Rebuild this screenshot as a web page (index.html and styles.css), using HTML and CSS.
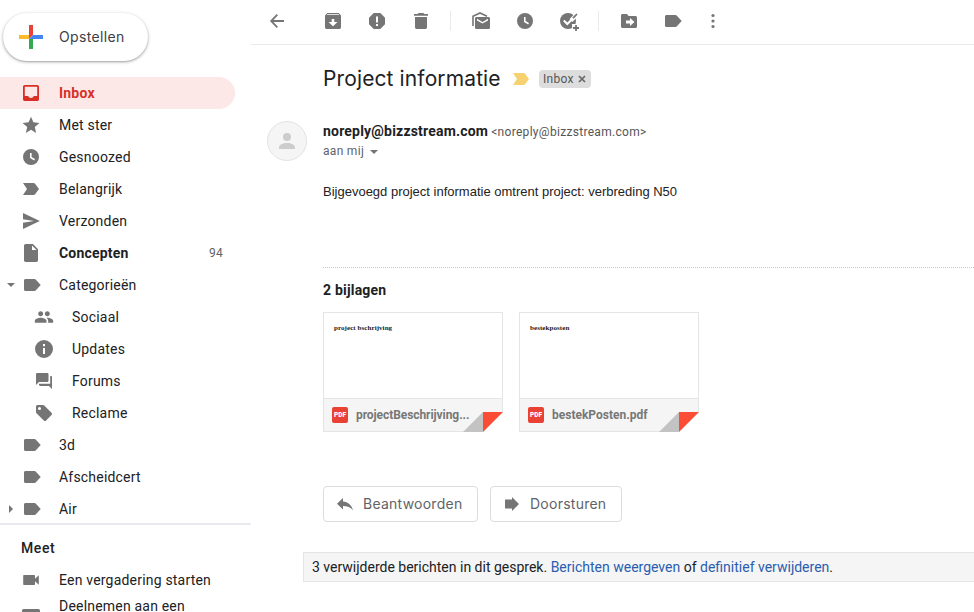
FILE: index.html
```html
<!DOCTYPE html>
<html lang="nl">
<head>
<meta charset="utf-8">
<title>Project informatie</title>
<link rel="stylesheet" href="styles.css">
</head>
<body>
<svg class="defs" aria-hidden="true">
  <symbol id="label" viewBox="0 0 20 20"><path d="M4.500 4h8.900c.6 0 1.100.3 1.500.8L19.700 10l-4.800 5.200c-.4.5-.9.8-1.500.8H4.500C3.700 16 3 15.300 3 14.500v-9C3 4.700 3.700 4 4.500 4z"/></symbol>
  <symbol id="important" viewBox="0 0 20 20"><path d="M2 4h10.600c.6 0 1.100.3 1.500.8L18 10l-3.900 5.200c-.4.5-.9.800-1.500.800H2l4-6z"/></symbol>
  <symbol id="clock" viewBox="0 0 20 20"><path fill-rule="evenodd" d="M10 2a8 8 0 1 0 0 16 8 8 0 0 0 0-16zM9 6h1.600v4l3.400 2-.8 1.400L9 11z"/></symbol>
  <symbol id="down" viewBox="0 0 10 10"><path d="M1 3h8L5 7z"/></symbol>
</svg>
<div class="app">
  <aside class="sidebar">
    <button class="compose">
      <svg width="24" height="24" viewBox="0 0 24 24"><path fill="#ea4335" d="M10 0h4v10l-4 4z"/><path fill="#fbbc2c" d="M0 10h10v4H0z"/><path fill="#34a853" d="M10 14h4v10h-4z"/><path fill="#4285f4" d="M14 10h10v4H10z"/></svg>
      <span>Opstellen</span>
    </button>
    <nav class="nav">
      <a class="row active"><svg class="ic" viewBox="0 0 20 20"><path fill-rule="evenodd" d="M3.800 2h12.400c1 0 1.800.8 1.800 1.800v12.400c0 1-.8 1.800-1.800 1.800H3.800c-1 0-1.800-.8-1.800-1.800V3.800C2 2.800 2.800 2 3.800 2zM3.800 3.800v9.200h3.400c.4 1.300 1.500 2 2.800 2s2.400-.7 2.800-2h3.400V3.800z"/></svg><span class="txt">Inbox</span></a>
      <a class="row"><svg class="ic" viewBox="0 0 20 20"><path d="M10 1.700l2.400 5.600 6 .6-4.600 4 1.300 6L10 14.800l-5.100 3.100 1.300-6-4.600-4 6-.6z"/></svg><span class="txt">Met ster</span></a>
      <a class="row"><svg class="ic"><use href="#clock"/></svg><span class="txt">Gesnoozed</span></a>
      <a class="row"><svg class="ic"><use href="#important"/></svg><span class="txt">Belangrijk</span></a>
      <a class="row"><svg class="ic" viewBox="0 0 20 20"><path d="M2 2l16.800 8L2 18v-6.200l11-1.800-11-1.800z"/></svg><span class="txt">Verzonden</span></a>
      <a class="row bold"><svg class="ic" viewBox="0 0 20 20"><path fill-rule="evenodd" d="M4.700 1H12l5 5.200v11.100c0 .9-.8 1.700-1.700 1.700H4.700C3.800 19 3 18.200 3 17.300V2.700C3 1.800 3.800 1 4.700 1zM11 2.500V7h4.500z"/></svg><span class="txt">Concepten</span><span class="count">94</span></a>
      <a class="row"><svg class="caret"><use href="#down"/></svg><svg class="ic"><use href="#label"/></svg><span class="txt">Categorieën</span></a>
      <a class="row sub"><svg class="ic" viewBox="0 0 24 24"><path d="M16 11c1.660 0 2.990-1.340 2.990-3S17.660 5 16 5s-3 1.340-3 3 1.340 3 3 3zm-8 0c1.660 0 2.990-1.340 2.990-3S9.660 5 8 5 5 6.340 5 8s1.340 3 3 3zm0 2c-2.330 0-7 1.170-7 3.500V19h14v-2.500c0-2.330-4.670-3.500-7-3.500zm8 0c-.29 0-.62.020-.97.050 1.160.84 1.970 1.970 1.970 3.450V19h6v-2.500c0-2.330-4.670-3.500-7-3.500z"/></svg><span class="txt">Sociaal</span></a>
      <a class="row sub"><svg class="ic" viewBox="0 0 20 20"><path fill-rule="evenodd" d="M10 1a9 9 0 1 0 0 18 9 9 0 0 0 0-18zM9 5h2v2.200H9zM9 9h2v6H9z"/></svg><span class="txt">Updates</span></a>
      <a class="row sub"><svg class="ic" viewBox="0 0 20 20"><path d="M3.500 2h9.700c.8 0 1.300.5 1.300 1.300v6.400c0 .8-.5 1.300-1.300 1.300H5l-3 3V3.300C2 2.500 2.700 2 3.500 2zM16.200 5H17c.6 0 1 .4 1 1v12l-3-3H6.300c-.8 0-1.300-.5-1.300-1.200v-1h11.200z"/></svg><span class="txt">Forums</span></a>
      <a class="row sub"><svg class="ic" viewBox="0 0 20 20"><path fill-rule="evenodd" d="M3.600 2H9c.5 0 .9.200 1.200.5l7.300 7.300c.7.600.7 1.600 0 2.300l-5.400 5.400c-.6.700-1.600.7-2.300 0L2.500 10.200C2.200 9.900 2 9.500 2 9V3.600C2 2.700 2.700 2 3.600 2zM5.500 4a1.500 1.500 0 1 0 0 3 1.500 1.500 0 0 0 0-3z"/></svg><span class="txt">Reclame</span></a>
      <a class="row"><svg class="ic"><use href="#label"/></svg><span class="txt">3d</span></a>
      <a class="row"><svg class="ic"><use href="#label"/></svg><span class="txt">Afscheidcert</span></a>
      <a class="row last"><svg class="caret" viewBox="0 0 10 10"><path d="M3 1v8l4-4z"/></svg><svg class="ic"><use href="#label"/></svg><span class="txt">Air</span></a>
    </nav>
    <section class="meet">
      <h2>Meet</h2>
      <a class="row"><svg class="ic" viewBox="0 0 20 20"><path d="M3 5h10.200c.5 0 .8.300.8.800v3L17.800 5.300v9.400L14 11.200v3c0 .5-.3.800-.8.800H3c-.5 0-.8-.3-.8-.8V5.800c0-.5.3-.8.800-.8z"/></svg><span class="txt">Een vergadering starten</span></a>
      <a class="row join"><svg class="ic" viewBox="0 0 20 20"><rect x="1" y="3" width="18" height="13" rx="1.500"/></svg><span class="txt">Deelnemen aan een</span></a>
    </section>
  </aside>
  <main class="main">
    <header class="toolbar">
      <svg class="ic back" viewBox="0 0 20 20"><path fill="none" stroke="#757575" stroke-width="1.800" d="M17 10H4.500M10.300 3.700L4.200 10l6.100 6.300"/></svg>
      <div class="group">
        <svg class="ic" viewBox="0 0 20 20"><path fill-rule="evenodd" d="M4.200 2h11.600L18 4.500v11.700c0 1-.8 1.800-1.800 1.800H3.800c-1 0-1.800-.8-1.800-1.800V4.500zM4.300 3.200l-.6.900h12.600l-.6-.9zM8.700 8v3H5.500l4.500 4.200 4.500-4.200h-3.200V8z"/></svg>
        <svg class="ic" viewBox="0 0 20 20"><path fill-rule="evenodd" d="M6.700 2h6.600L18 6.700v6.600L13.300 18H6.700L2 13.300V6.700zM9 5.500v6h2v-6zM9 13v2h2v-2z"/></svg>
        <svg class="ic" viewBox="0 0 20 20"><path d="M7.500 2h5l.9 1H17v1.800H3V3h3.600zM4 6h12v10.200c0 1-.8 1.800-1.800 1.800H5.800c-1 0-1.800-.8-1.800-1.800z"/></svg>
      </div>
      <span class="sep"></span>
      <div class="group">
        <svg class="ic" viewBox="0 0 20 20"><path fill="none" stroke="#757575" stroke-width="1.600" d="M2 15V5.300L9 2l7 3.300"/><path fill-rule="evenodd" d="M5.600 6h11.800c.9 0 1.600.7 1.600 1.600v8.800c0 .9-.7 1.600-1.600 1.600H5.600c-.9 0-1.600-.7-1.600-1.600V7.600C4 6.700 4.700 6 5.600 6zM6 7.700v1.700l5.500 3.200L17 9.400V7.700l-5.500 3.200z"/></svg>
        <svg class="ic"><use href="#clock"/></svg>
        <svg class="ic" viewBox="0 0 20 20"><circle cx="9" cy="10" r="8"/><path fill="none" stroke="#fff" stroke-width="4" d="M12 9.500l7-7"/><path fill="none" stroke="#fff" stroke-width="2" d="M4.800 9.500l3.500 3.500 6-6"/><path fill="none" stroke="#757575" stroke-width="1.800" d="M14 7.200l4-4.200"/><path fill="#fff" d="M13 13h7v7h-7z"/><path d="M16.100 14h1.800v2.100H20v1.800h-2.100V20h-1.800v-2.100H14v-1.800h2.100z"/></svg>
      </div>
      <span class="sep"></span>
      <div class="group">
        <svg class="ic" viewBox="0 0 20 20"><path fill-rule="evenodd" d="M3.500 3H8l1.600 2h6.900c.8 0 1.500.7 1.500 1.500v9c0 .8-.7 1.500-1.500 1.500h-13C2.700 17 2 16.300 2 15.500v-11C2 3.700 2.700 3 3.500 3zM11 7v2.500H7v3h4V15l4.500-4z"/></svg>
        <svg class="ic tag"><use href="#label"/></svg>
        <svg class="ic more" viewBox="0 0 20 20"><circle cx="10" cy="4.500" r="1.600"/><circle cx="10" cy="10" r="1.600"/><circle cx="10" cy="15.500" r="1.600"/></svg>
      </div>
    </header>
    <div class="subject">
      <h1>Project informatie</h1>
      <svg class="ic imp"><use href="#important"/></svg>
      <span class="chip">Inbox<svg width="8" height="8" viewBox="0 0 8 8"><path fill="none" stroke="#666" stroke-width="1.700" d="M1 1l6 6M7 1L1 7"/></svg></span>
    </div>
    <div class="sender">
      <div class="avatar"><svg width="20" height="20" viewBox="0 0 20 20"><circle cx="10" cy="6" r="4"/><path d="M2 18v-1.500c0-3 4-4.500 8-4.500s8 1.500 8 4.500V18z"/></svg></div>
      <div class="who">
        <div class="from"><b>noreply@bizzstream.com</b><span>&lt;noreply@bizzstream.com&gt;</span></div>
        <div class="to"><span>aan mij</span><svg class="caret"><use href="#down"/></svg></div>
      </div>
    </div>
    <p class="body">Bijgevoegd project informatie omtrent project: verbreding N50</p>
    <section class="attachments">
      <h3>2 bijlagen</h3>
      <div class="cards">
        <div class="card">
          <div class="preview">project bschrijving</div>
          <div class="file"><span class="pdf">PDF</span><span class="name">projectBeschrijving...</span></div>
          <svg class="fold" viewBox="0 0 40 20"><path fill="#fff" d="M20 0h20v20H20z"/><path fill="#c3c3c3" d="M0 20L20 0v20z"/><path fill="#fb4c35" d="M20 0h20L20 20z"/></svg>
        </div>
        <div class="card">
          <div class="preview">bestekposten</div>
          <div class="file"><span class="pdf">PDF</span><span>bestekPosten.pdf</span></div>
          <svg class="fold" viewBox="0 0 40 20"><path fill="#fff" d="M20 0h20v20H20z"/><path fill="#c3c3c3" d="M0 20L20 0v20z"/><path fill="#fb4c35" d="M20 0h20L20 20z"/></svg>
        </div>
      </div>
    </section>
    <div class="actions">
      <button class="reply"><svg class="ic" viewBox="0 0 20 20"><path d="M8 4v3.500c5 .5 8.500 3.500 10 8.700-2.500-3-5.500-4.200-10-4.200v3.500L2 9.800z"/></svg><span>Beantwoorden</span></button>
      <button class="forward"><svg class="ic" viewBox="0 0 20 20"><path d="M3 5.500h7V3l7 7-7 7v-2.500H3z"/></svg><span>Doorsturen</span></button>
    </div>
    <div class="notice"><span>3 verwijderde berichten in dit gesprek. <a>Berichten weergeven</a> of <a>definitief verwijderen</a>.</span></div>
  </main>
</div>
</body>
</html>
```
FILE: styles.css
```css
* { box-sizing: border-box; }
body { margin: 0; background: #fff; color: #202124; font-family: Roboto, "Liberation Sans", sans-serif; font-size: 14px; overflow: hidden; }
h1, h2, h3, p { margin: 0; font-weight: 400; }
svg { display: block; flex: none; fill: #757575; }
button { background: #fff; font-family: Inter, sans-serif; font-size: 14px; }
.defs { position: absolute; width: 0; height: 0; }
.ic { width: 20px; height: 20px; }
.caret { width: 10px; height: 10px; }
.app { display: flex; width: 974px; height: 612px; overflow: hidden; }

.sidebar { flex: none; width: 251px; padding-top: 13px; }
.compose { display: flex; align-items: center; gap: 16px; width: 145px; height: 48px; margin: 0 0 16px 3px; padding: 0 0 0 16px; border: 0; border-radius: 24px; color: #3c4043; box-shadow: 0 1px 2px rgba(60,64,67,.35), 0 1px 3px 1px rgba(60,64,67,.15); }
.compose span { padding-bottom: 1px; letter-spacing: .35px; }
.nav { height: 446px; overflow: hidden; }
.row { display: flex; align-items: center; width: 235px; height: 32px; padding: 0 12px 0 21px; white-space: nowrap; }
.row .ic { margin-right: 18px; }
.row .caret { margin: 0 5px 0 -15px; }
.txt { letter-spacing: .2px; }
.sub { padding-left: 34px; }
.active { background: #fce8e6; border-radius: 0 16px 16px 0; color: #d93025; font-weight: 700; }
.active .ic { fill: #d93025; }
.bold .txt { font-weight: 700; }
.count { margin-left: auto; color: #5f6368; font-size: 12px; letter-spacing: .3px; }
.meet { border-top: 2px solid #e8eaed; }
.meet h2 { padding: 15px 0 0 21px; height: 39px; font-size: 14px; line-height: 17px; font-weight: 500; letter-spacing: .6px; }
.join { align-items: flex-start; }
.join .txt { line-height: 20px; }
.join .ic { margin-top: 10px; }

.main { flex: 1; min-width: 0; }
.toolbar { display: flex; align-items: center; height: 45px; padding: 0 0 3px 16px; border-bottom: 1px solid #e8eaed; }
.back { margin-right: 36px; }
.group { display: flex; gap: 24px; }
.sep { width: 1px; height: 20px; margin: 0 20px 0 19px; background: #e8eaed; }
.tag { margin-left: -1px; }
.more { margin-left: -3px; }
.subject { display: flex; align-items: center; height: 28px; margin: 20px 0 0 72px; }
h1 { width: 188px; font-family: Inter, sans-serif; font-size: 21px; line-height: 28px; letter-spacing: .12px; white-space: nowrap; }
.imp { fill: #f7d070; }
.chip { display: flex; align-items: center; gap: 4px; width: 52px; height: 18px; margin: 0 0 0 8px; padding-left: 4px; border-radius: 4px; background: #ddd; color: #555; font-size: 12px; letter-spacing: .3px; }
.sender { display: flex; gap: 16px; margin: 28px 0 0 16px; height: 40px; }
.avatar { display: flex; align-items: center; justify-content: center; width: 40px; height: 40px; border: 1px solid #e3e3e3; border-radius: 50%; background: #f5f5f5; }
.avatar svg { fill: #ccc; }
.from { display: flex; align-items: baseline; gap: 3px; line-height: 20px; }
.from b { font-size: 14px; letter-spacing: .2px; }
.from span { color: #555; font-size: 12px; letter-spacing: .3px; }
.to { display: flex; align-items: center; gap: 5px; height: 20px; color: #5f6368; font-size: 12px; letter-spacing: .3px; }
.to span { padding-bottom: 2px; }
.body { margin: 21px 0 0 72px; color: #222; font: 13px/20px "Liberation Sans", Arial, sans-serif; }
.attachments { height: 219px; margin: 65px 0 0 72px; padding-top: 13px; border-top: 1px dotted #c8c8c8; }
h3 { font-size: 14px; line-height: 18px; font-weight: 700; letter-spacing: .2px; }
.cards { display: flex; gap: 16px; margin-top: 13px; }
.card { position: relative; width: 180px; height: 120px; border: 1px solid #e5e5e5; }
.preview { height: 86px; padding: 10px; border-bottom: 1px solid #e5e5e5; font: bold 7px/10px "Liberation Serif", serif; letter-spacing: .07px; }
.file { display: flex; align-items: center; height: 32px; padding-left: 8px; background: #f5f5f5; color: #777; font-size: 12px; font-weight: 700; }
.name { letter-spacing: -.07px; }
.pdf { width: 16px; height: 16px; margin-right: 8px; border-radius: 2px; background: #e94235; color: #fff; font-size: 6.500px; line-height: 16px; font-weight: 900; text-align: center; }
.fold { position: absolute; right: -1px; bottom: -1px; width: 40px; height: 20px; }
.actions { display: flex; gap: 12px; margin: 0 0 0 72px; }
.actions button { display: flex; align-items: center; gap: 8px; height: 36px; padding: 0 0 0 11px; border: 1px solid #dadce0; border-radius: 4px; color: #5f6368; }
.actions span { padding-bottom: 1px; letter-spacing: .25px; }
.reply { width: 155px; }
.forward { width: 132px; }
.notice { display: flex; align-items: center; height: 30px; margin: 30px -10px 0 52px; padding-left: 8px; border: 1px solid #e5e5e5; background: #f5f5f5; white-space: nowrap; color: #202124; }
.notice a { color: #2a5db0; }
```
